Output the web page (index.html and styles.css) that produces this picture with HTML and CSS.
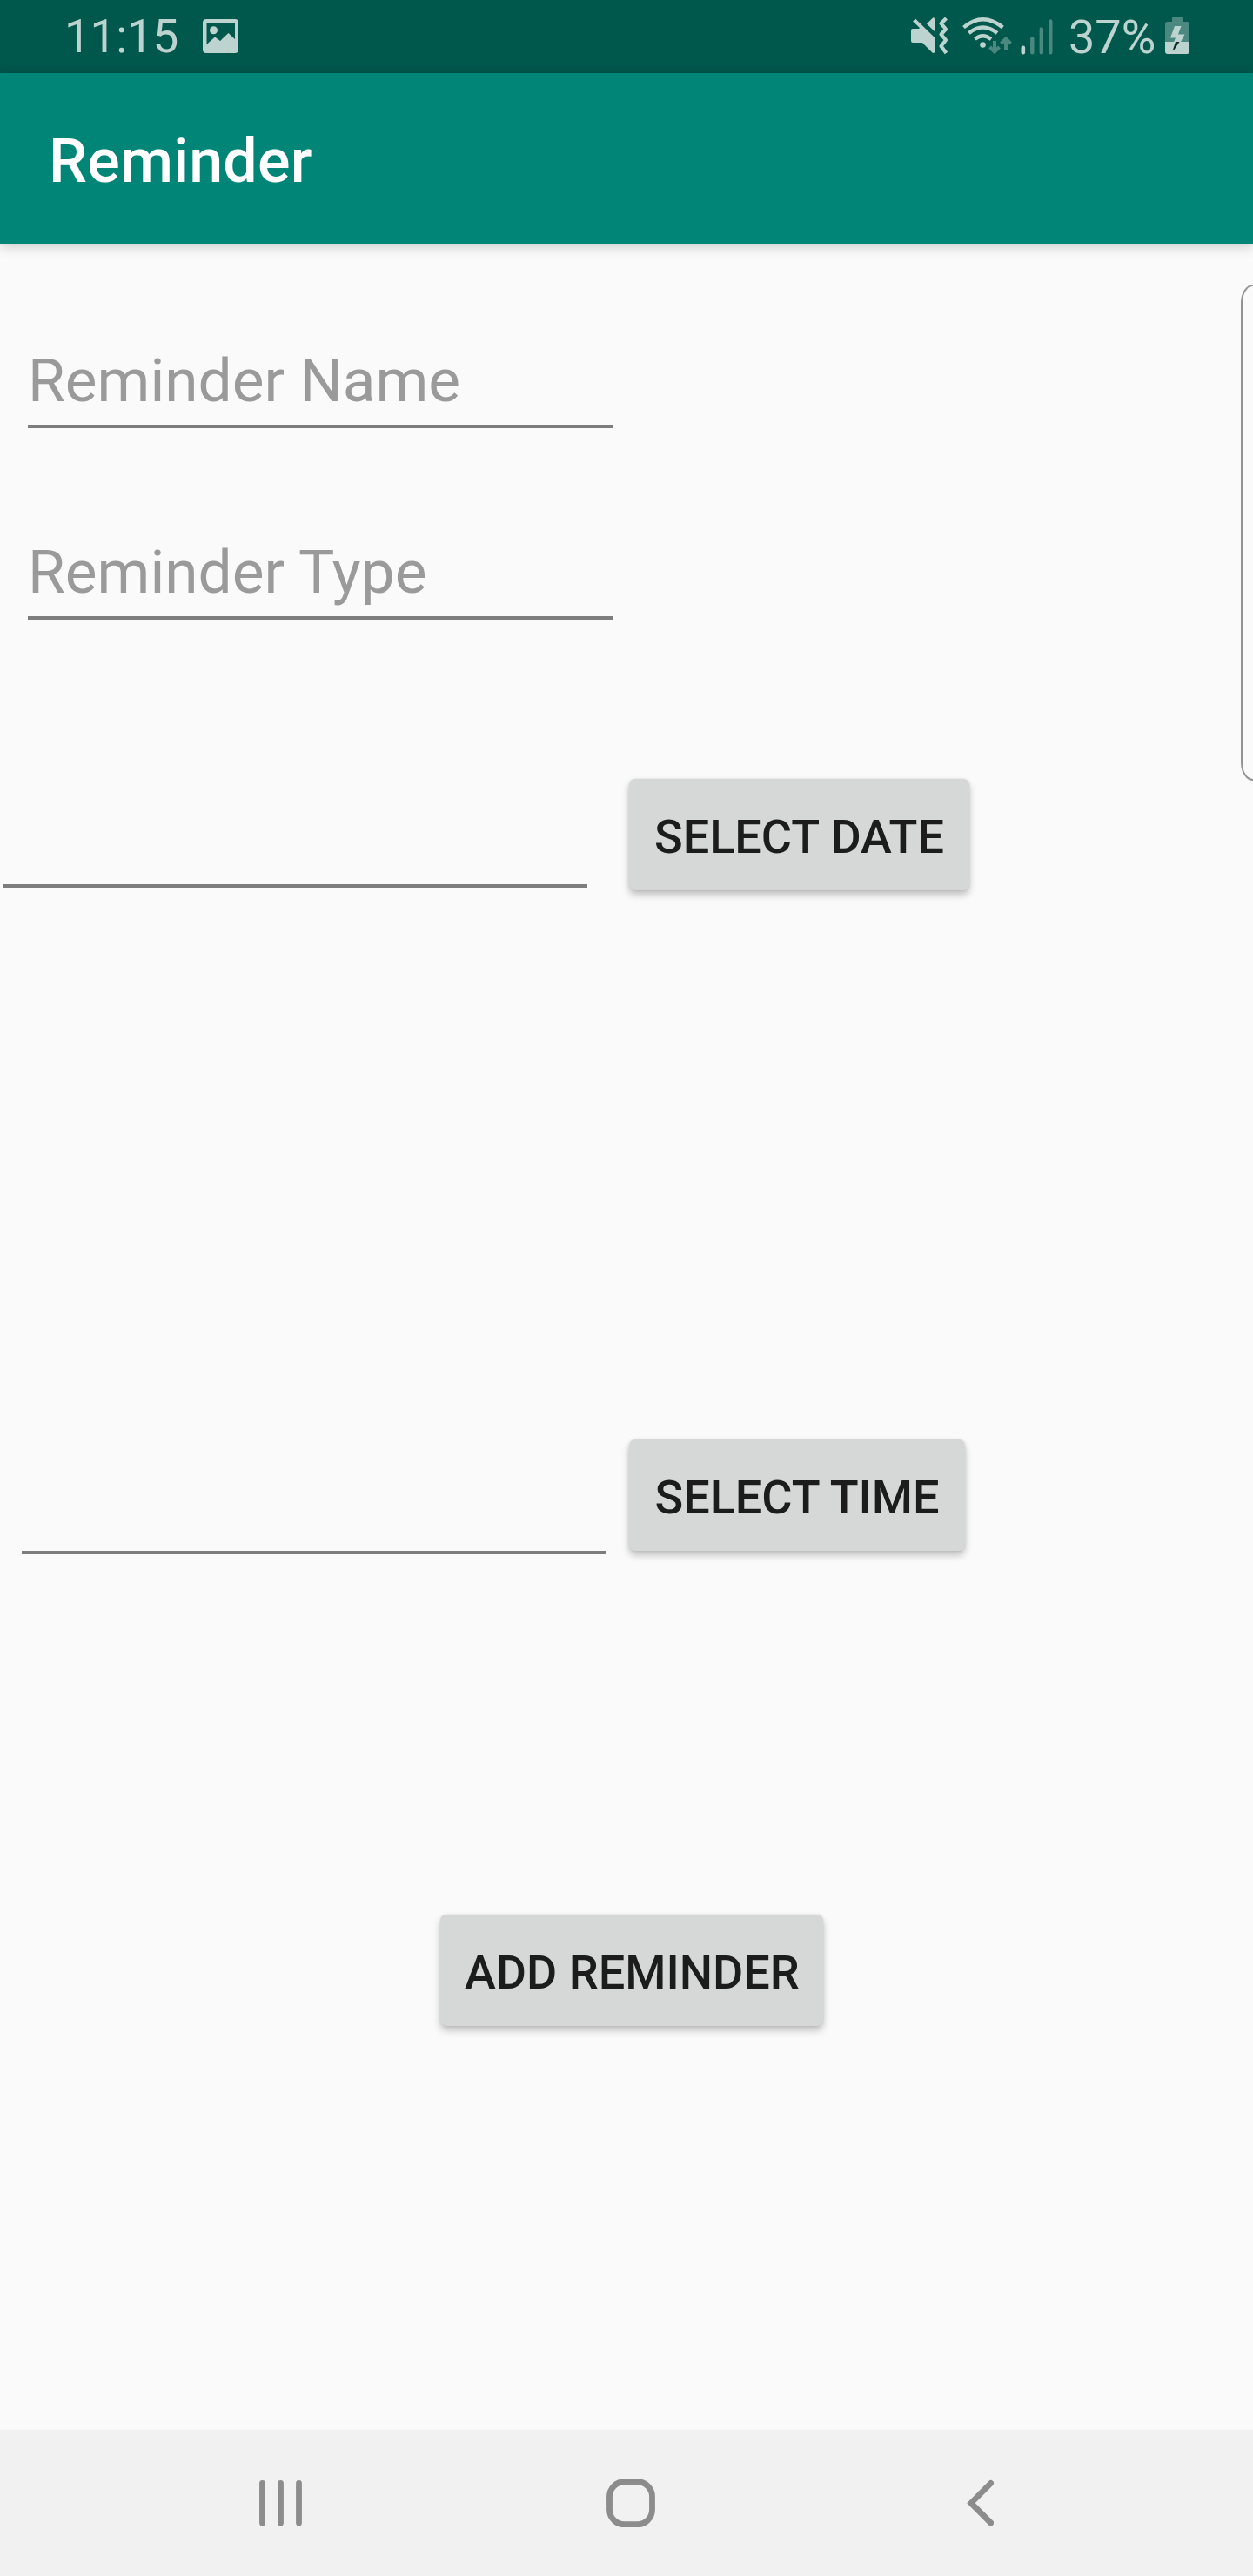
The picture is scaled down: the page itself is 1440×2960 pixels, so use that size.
FILE: index.html
```html
<!DOCTYPE html>
<html lang="en">
<head>
<meta charset="utf-8">
<title>Reminder</title>
<link rel="stylesheet" href="styles.css">
</head>
<body>
<div class="screen">
  <header class="status">
    <span class="clock">11:15</span>
    <svg class="picture" width="41" height="39" viewBox="0 0 41 39"><path fill="currentColor" fill-rule="evenodd" d="M4 0H37Q41 0 41 4V35Q41 39 37 39H4Q0 39 0 35V4Q0 0 4 0ZM4.500 4.500V29L14 20.500 20 25 29.500 16 37 23V4.500Z"/><circle cx="12.500" cy="12.700" r="4.500" fill="currentColor"/></svg>
    <svg class="icons" width="168" height="46" viewBox="0 0 168 46">
      <g fill="currentColor">
        <path d="M2 15H9L10 14 2 6.500 5 3.500 27 25V42.500L25 43 13 31H2Q0 31 0 29V17Q0 15 2 15ZM18 9.500 24 3.500Q27 1 27 4V18Z"/>
        <circle cx="82.500" cy="33.500" r="3.300"/>
        <rect x="126.500" y="34.500" width="4.600" height="10" rx="2.300"/>
      </g>
      <g fill="none" stroke="currentColor" stroke-width="4.200">
        <path stroke-linejoin="round" d="M40.500 3 34.500 9 40 15.500 34.500 21.500 40 28 34.500 35 40.500 43"/>
        <path d="M60.500 13.500Q82.500 -5 105.500 13.500M66.500 20Q82.500 7 99 20M73.500 27Q82.500 19.500 92 27"/>
      </g>
      <g class="dim" fill="none" stroke="currentColor" stroke-width="4">
        <path d="M96 29V41M90.500 36 96 41.500 101.500 36M109 39V27M103.500 32 109 26.500 114.500 32"/>
        <path stroke-width="4.400" stroke-linecap="round" d="M139.300 26.500V42.300M149.800 15.500V42.300M160.300 6.500V42.300"/>
      </g>
    </svg>
    <span class="percent">37%</span>
    <svg class="battery" width="28" height="43" viewBox="0 0 28 43"><path class="dim" fill="currentColor" d="M8 6V2Q8 0 10 0H18Q20 0 20 2V6H25Q28 6 28 9V29H0V9Q0 6 3 6Z"/><path fill="currentColor" d="M0 29H28V40Q28 43 25 43H3Q0 43 0 40ZM11 11H18.500L15 20.500H22.500L18 29H10L12 24.500H6Z"/><path fill="#102e29" d="M12 29H16.500L10.500 38H9Z"/></svg>
  </header>
  <div class="appbar"><h1>Reminder</h1></div>
  <main>
    <form class="form">
      <div class="field name">Reminder Name</div>
      <div class="field type">Reminder Type</div>
      <div class="row date"><div class="field"></div><button type="button">SELECT DATE</button></div>
      <div class="row time"><div class="field"></div><button type="button">SELECT TIME</button></div>
      <button class="add" type="button">ADD REMINDER</button>
    </form>
    <aside class="panel"></aside>
  </main>
  <nav>
    <svg width="50" height="54" viewBox="0 0 50 54"><path d="M3.500 4.400V50M24.500 4.400V50M45.500 4.400V50"/></svg>
    <svg class="home" width="56" height="56" viewBox="0 0 56 56"><rect x="3.500" y="3.750" width="49" height="49" rx="17"/></svg>
    <svg width="32" height="54" viewBox="0 0 32 54"><path d="M28.700 4.400 6 27.200 28.700 50"/></svg>
  </nav>
</div>
</body>
</html>
```
FILE: styles.css
```css
* { box-sizing: border-box; }
body { margin: 0; font-family: Roboto, "Liberation Sans", sans-serif; }
.screen { width: 1440px; height: 2960px; display: flex; flex-direction: column; background: #fafafa; overflow: hidden; }
svg { display: block; flex: none; }

.status { height: 84px; flex: none; display: flex; align-items: flex-start; background: #00574b; color: #bcd3cf; font-size: 54px; line-height: 85px; }
.clock { width: 158px; margin-left: 74px; font-size: 53px; letter-spacing: -0.2px; }
.picture { margin: 22px 0 0 1px; }
.icons { margin: 18px 0 0 773px; }
.percent { width: 109px; margin-left: 13px; white-space: nowrap; }
.battery { margin: 19px 0 0 2px; }
.dim { opacity: .4; }

.appbar { position: relative; z-index: 1; height: 196px; flex: none; background: #008577; box-shadow: 0 3px 14px rgba(0,0,0,.2); }
h1 { margin: 0; padding-left: 56px; color: #fff; font-size: 70px; font-weight: 500; line-height: 202px; letter-spacing: 0.2px; }

main { flex: 1; display: flex; justify-content: space-between; }
.form { width: 1200px; }
.field { width: 672px; border-bottom: 4px solid #7d7d7d; color: #9a9a9a; font-size: 69.4px; line-height: 100px; }
.name, .type { height: 104px; margin-left: 32px; }
.name { margin-top: 108px; }
.type { margin-top: 116px; }
.row { display: flex; align-items: flex-start; }
.date { margin: 183px 0 0 3px; gap: 48px; }
.date .field { height: 125px; }
.time { margin: 631px 0 0 25px; gap: 26px; }
.time .field { height: 132px; }
button { height: 128px; padding: 5px 28px 0; border: 0; border-radius: 7px; background: #d6d8d7; color: #1c1c1c; font: 500 54px/123px Roboto, "Liberation Sans", sans-serif; white-space: nowrap; box-shadow: 0 5px 9px rgba(0,0,0,.24), 0 0 3px rgba(0,0,0,.1); }
.date button { width: 391px; }
.time button { width: 386px; }
.add { display: block; width: 440px; margin: 414px 0 0 506px; }
.panel { width: 14px; height: 570px; margin-top: 47px; border: 2px solid #939393; border-right: 0; border-radius: 17px 0 0 17px / 25px 0 0 25px; }

nav { height: 168px; flex: none; display: flex; align-items: center; padding: 0 298px; background: #f1f1f1; fill: none; stroke: #8c8c8c; stroke-width: 6.8; stroke-linecap: round; stroke-linejoin: miter; }
.home { margin: 0 357px 0 349px; }
```
